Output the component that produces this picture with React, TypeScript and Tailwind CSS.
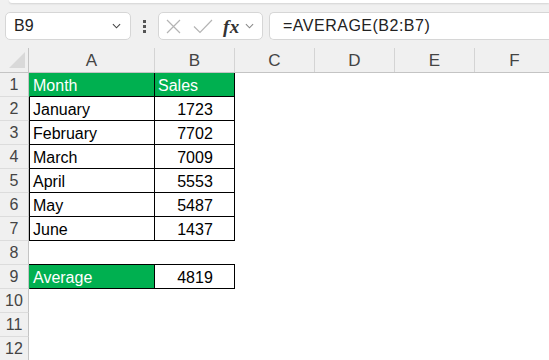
import React from "react";

const COLS = ["A", "B", "C", "D", "E", "F"];
const COL_W = ["w-[126px]", "w-[80px]", "w-[80px]", "w-[80px]", "w-[80px]", "w-[80px]"];

type Cell = { text?: string; green?: boolean; boxed?: boolean; center?: boolean; under?: boolean };

const rows: Cell[][] = [
  [{ text: "Month", green: true, boxed: true }, { text: "Sales", green: true, boxed: true }],
  [{ text: "January", boxed: true }, { text: "1723", boxed: true, center: true }],
  [{ text: "February", boxed: true }, { text: "7702", boxed: true, center: true }],
  [{ text: "March", boxed: true }, { text: "7009", boxed: true, center: true }],
  [{ text: "April", boxed: true }, { text: "5553", boxed: true, center: true }],
  [{ text: "May", boxed: true }, { text: "5487", boxed: true, center: true }],
  [{ text: "June", boxed: true }, { text: "1437", boxed: true, center: true }],
  [{ under: true }, { under: true }],
  [{ text: "Average", green: true, boxed: true }, { text: "4819", boxed: true, center: true }],
  [],
  [],
  [],
];

function Chevron({ className }: { className?: string }) {
  return (
    <svg className={className} viewBox="0 0 10 6" fill="none" stroke="currentColor" strokeWidth={1.2}>
      <path d="M1 1l4 4 4-4" />
    </svg>
  );
}

function FormulaBar() {
  return (
    <div className="relative h-[48px] bg-[#f0f0f0] flex items-start pt-[12px]">
      <div className="absolute top-0 left-[9px] right-0 h-[3px] bg-white rounded-bl-[6px] shadow-[0_1px_2px_rgba(0,0,0,0.12)]" />
      <div className="ml-[5px] w-[126px] h-[28px] bg-white border border-[#d6d6d6] rounded-[5px] flex items-center pl-[8px] pr-[9px] justify-between">
        <span className="text-[16px] text-[#222]">B9</span>
        <Chevron className="w-[9px] h-[6px] text-[#444]" />
      </div>
      <div className="w-[27px] h-[28px] flex flex-col items-center justify-center gap-[2px]">
        <div className="w-[3px] h-[3px] bg-[#555]" />
        <div className="w-[3px] h-[3px] bg-[#555]" />
        <div className="w-[3px] h-[3px] bg-[#555]" />
      </div>
      <div className="w-[105px] h-[28px] bg-white border border-[#d6d6d6] rounded-[5px] flex items-center pl-[7px]">
        <svg className="w-[15px] h-[15px] text-[#b4b4b4]" viewBox="0 0 15 15" fill="none" stroke="currentColor" strokeWidth={1.2}>
          <path d="M1 1l13 13M14 1L1 14" />
        </svg>
        <svg className="ml-[12px] w-[20px] h-[15px] text-[#b4b4b4]" viewBox="0 0 20 15" fill="none" stroke="currentColor" strokeWidth={1.2}>
          <path d="M1 7.5l6 6L19 1" />
        </svg>
        <span className="ml-[10px] font-['Liberation_Serif',serif] italic font-bold text-[19px] leading-none text-[#333] tracking-[0.5px]">fx</span>
        <Chevron className="ml-[5px] w-[9px] h-[6px] text-[#888]" />
      </div>
      <div className="ml-[6px] flex-1 h-[28px] bg-white border border-r-0 border-[#d6d6d6] rounded-l-[5px] flex items-center pl-[13px]">
        <span className="text-[16px] text-[#222] tracking-[0.5px]">=AVERAGE(B2:B7)</span>
      </div>
    </div>
  );
}

function HeaderRow() {
  return (
    <div className="flex h-[25px] bg-[#f0f0f0] border-b border-[#c4c4c4]">
      <div className="relative w-[29px] shrink-0 border-r border-[#c4c4c4]">
        <div className="absolute left-[9px] top-[4px] w-0 h-0 border-l-[16px] border-l-transparent border-b-[16px] border-b-[#d9d9d9]" />
      </div>
      {COLS.map((c, i) => (
        <div
          key={c}
          className={`${COL_W[i]} shrink-0 border-r border-[#d4d4d4] flex items-center justify-center text-[17px] text-[#444] pt-[2px]`}
        >
          {c}
        </div>
      ))}
    </div>
  );
}

function SheetRow({ n, cells }: { n: number; cells: Cell[] }) {
  return (
    <div className="flex h-[24px]">
      <div className="w-[29px] shrink-0 bg-[#f0f0f0] border-r border-b border-r-[#c4c4c4] border-b-[#dcdcdc] flex items-center justify-center text-[16px] text-[#444] pt-[1px]">
        {n}
      </div>
      {COLS.map((c, i) => {
        const cell = cells[i] || {};
        const cls = [
          COL_W[i],
          "shrink-0 flex items-center text-[16px] whitespace-nowrap pt-[2px]",
          cell.green ? "bg-[#00b050] text-white" : "bg-white text-black",
          cell.boxed ? "border-r border-b border-black" : "",
          cell.under ? "border-b border-black" : "",
          cell.boxed && i === 0 ? (cell.green ? "border-l border-l-[#00b050]" : "border-l border-l-black") : "",
          cell.center ? "justify-center pl-[1px]" : "pl-[3px]",
        ].join(" ");
        return (
          <div key={c} className={cls}>
            {cell.text}
          </div>
        );
      })}
    </div>
  );
}

export default function App() {
  return (
    <div className="w-[549px] h-[360px] overflow-hidden bg-white font-['Liberation_Sans',Arial,sans-serif]">
      <FormulaBar />
      <HeaderRow />
      {rows.map((r, i) => (
        <SheetRow key={i} n={i + 1} cells={r} />
      ))}
    </div>
  );
}
